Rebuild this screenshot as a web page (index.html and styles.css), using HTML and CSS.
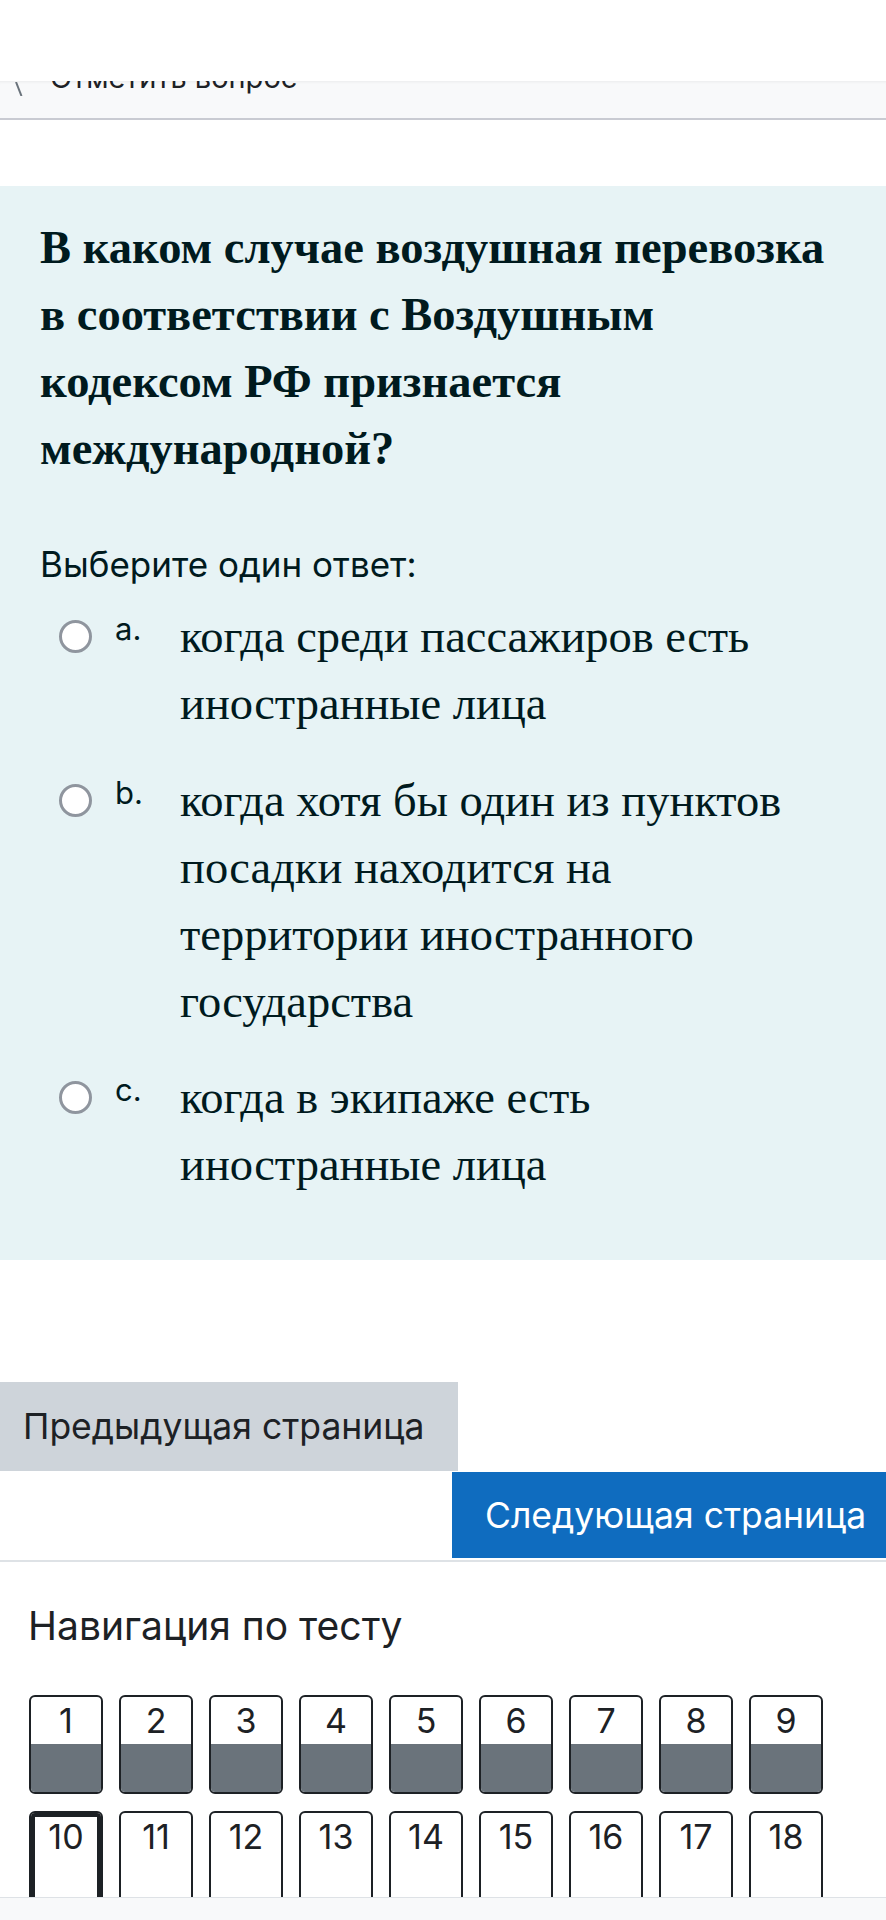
FILE: index.html
```html
<!DOCTYPE html>
<html lang="ru">
<head>
<meta charset="utf-8">
<title>Тест</title>
<link rel="stylesheet" href="styles.css">
</head>
<body>
<div class="topbar">
  <svg class="flag" viewBox="0 0 8 14" aria-hidden="true"><line x1="1" y1="0" x2="6.5" y2="14" stroke="#6a737b" stroke-width="2"/></svg>
  <span class="flagtext">Отметить вопрос</span>
</div>
<main>
  <section class="question">
    <h2 class="qtext">В каком случае воздушная перевозка<br>в соответствии с Воздушным<br>кодексом РФ признается<br>международной?</h2>
    <div class="prompt">Выберите один ответ:</div>
    <div class="answers">
      <div class="answer">
        <span class="radio"></span>
        <span class="num">a.</span>
        <div class="atext">когда среди пассажиров есть иностранные лица</div>
      </div>
      <div class="answer">
        <span class="radio"></span>
        <span class="num">b.</span>
        <div class="atext">когда хотя бы один из пунктов посадки находится на территории иностранного государства</div>
      </div>
      <div class="answer">
        <span class="radio"></span>
        <span class="num">c.</span>
        <div class="atext">когда в экипаже есть иностранные лица</div>
      </div>
    </div>
  </section>
  <div class="submitbtns">
    <div class="btn btn-prev">Предыдущая страница</div>
    <div class="btn btn-next">Следующая страница</div>
  </div>
  <hr class="sep">
  <h3 class="navtitle">Навигация по тесту</h3>
  <div class="navgrid">
    <div class="qbox answered"><span class="qnum">1</span><span class="qfill"></span></div>
    <div class="qbox answered"><span class="qnum">2</span><span class="qfill"></span></div>
    <div class="qbox answered"><span class="qnum">3</span><span class="qfill"></span></div>
    <div class="qbox answered"><span class="qnum">4</span><span class="qfill"></span></div>
    <div class="qbox answered"><span class="qnum">5</span><span class="qfill"></span></div>
    <div class="qbox answered"><span class="qnum">6</span><span class="qfill"></span></div>
    <div class="qbox answered"><span class="qnum">7</span><span class="qfill"></span></div>
    <div class="qbox answered"><span class="qnum">8</span><span class="qfill"></span></div>
    <div class="qbox answered"><span class="qnum">9</span><span class="qfill"></span></div>
    <div class="qbox current"><span class="qnum">10</span></div>
    <div class="qbox"><span class="qnum">11</span></div>
    <div class="qbox"><span class="qnum">12</span></div>
    <div class="qbox"><span class="qnum">13</span></div>
    <div class="qbox"><span class="qnum">14</span></div>
    <div class="qbox"><span class="qnum">15</span></div>
    <div class="qbox"><span class="qnum">16</span></div>
    <div class="qbox"><span class="qnum">17</span></div>
    <div class="qbox"><span class="qnum">18</span></div>
  </div>
</main>
<div class="footerbar"></div>
</body>
</html>
```

FILE: styles.css
```css
html, body {
  margin: 0;
  padding: 0;
  background: #ffffff;
}
body {
  font-family: Inter, "Noto Sans", sans-serif;
  color: #1d2125;
}

.topbar {
  margin-top: 81px;
  height: 37px;
  background: #f8f9fa;
  border-bottom: 2px solid #c9cbd2;
  overflow: hidden;
  display: flex;
  align-items: flex-start;
  padding-left: 15px;
  box-shadow: inset 0 3px 3px -2px rgba(0, 0, 0, 0.06);
}
.flag {
  flex: none;
  width: 8px;
  height: 14px;
  margin-top: 1px;
}
.flagtext {
  margin-left: 27px;
  margin-top: -18px;
  font-size: 29px;
  line-height: 29px;
  color: #1d2125;
  white-space: nowrap;
}

.question {
  margin-top: 66px;
  background: #e7f3f5;
  padding: 28px 40px 62px 40px;
  color: #001a1e;
}
.qtext {
  margin: 0;
  font-family: "Liberation Serif", "Times New Roman", serif;
  font-weight: 700;
  font-size: 46.5px;
  line-height: 67px;
}
.prompt {
  margin-top: 60px;
  font-size: 35px;
  line-height: 45px;
}
.answers {
  margin-top: 16px;
  padding-left: 19px;
  padding-right: 11px;
  display: flex;
  flex-direction: column;
  gap: 29.5px;
}
.answer {
  display: flex;
  align-items: flex-start;
}
.radio {
  flex: none;
  width: 33px;
  height: 33px;
  box-sizing: border-box;
  border: 3px solid #8f959e;
  border-radius: 50%;
  background: #ffffff;
  margin-top: 17px;
}
.num {
  flex: none;
  width: 65px;
  margin-left: 23px;
  font-size: 31px;
  line-height: 52px;
}
.atext {
  flex: 1;
  font-family: "Liberation Serif", "Times New Roman", serif;
  font-size: 46.5px;
  line-height: 67px;
}

.submitbtns {
  margin-top: 122px;
  display: flex;
  flex-direction: column;
}
.btn {
  box-sizing: border-box;
  display: flex;
  align-items: center;
  font-size: 35.5px;
  white-space: nowrap;
}
.btn-prev {
  width: 458px;
  height: 89px;
  padding-left: 23px;
  background: #ced4da;
  color: #1d2125;
}
.btn-next {
  align-self: flex-end;
  width: 434px;
  height: 86px;
  margin-top: 1px;
  padding-left: 33px;
  background: #0f6cbf;
  color: #ffffff;
}
.sep {
  margin: 2px 0 0;
  border: 0;
  border-top: 2px solid #dee2e6;
  height: 0;
}

.navtitle {
  margin: 41px 0 0 28px;
  font-size: 39px;
  line-height: 46px;
  font-weight: 400;
  color: #1d2125;
}
.navgrid {
  margin: 46px 0 0 29px;
  display: grid;
  grid-template-columns: repeat(9, 74px);
  gap: 17px 16px;
}
.qbox {
  height: 99px;
  box-sizing: border-box;
  border: 2px solid #1d2125;
  border-radius: 6px;
  background: #ffffff;
  overflow: hidden;
  display: flex;
  flex-direction: column;
}
.qnum {
  height: 47px;
  line-height: 47px;
  text-align: center;
  font-size: 34px;
  color: #1d2125;
}
.qfill {
  flex: 1;
  background: #6a737b;
}
.qbox.current {
  box-shadow: inset 0 0 0 4px #1d2125;
}

.footerbar {
  position: fixed;
  left: 0;
  right: 0;
  bottom: 0;
  height: 22px;
  background: #f8f9fa;
  border-top: 1px solid #dee2e6;
}
```
